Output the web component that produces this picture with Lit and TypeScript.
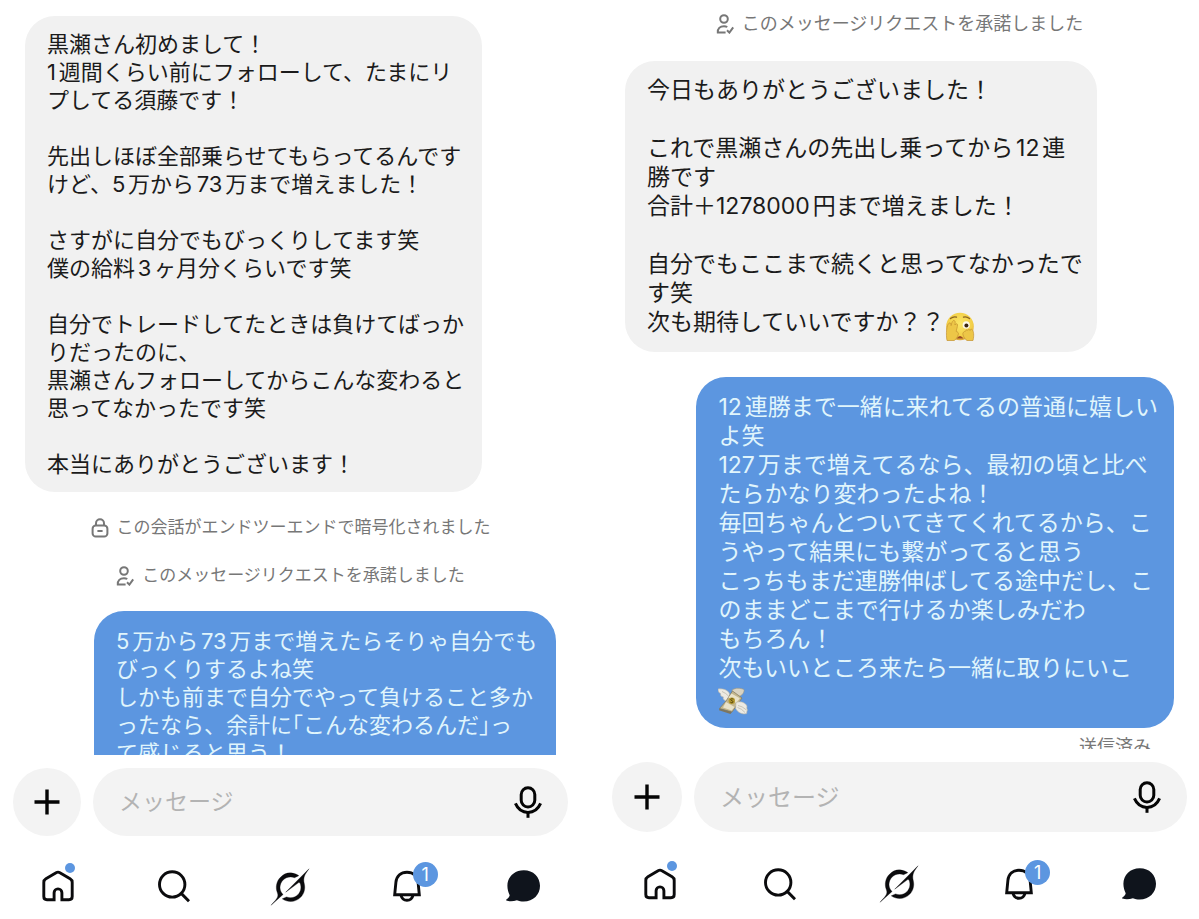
import { LitElement, html, css, nothing, TemplateResult } from "lit";
import { customElement, property } from "lit/decorators.js";

type Item =
  | { kind: "notice"; icon: "lock" | "accepted"; text: string }
  | { kind: "received" | "sent"; body: TemplateResult; status?: string };

const icons = {
  lock: html`<svg class="small" viewBox="0 0 18 20" aria-hidden="true">
    <g fill="none" stroke="currentColor" stroke-width="2">
      <path d="M5 8V5.2a4 4 0 0 1 8 0V8" />
      <rect x="1.6" y="7.6" width="14.8" height="11" rx="3.2" />
      <path d="M6.4 13h5.2" />
    </g>
  </svg>`,
  accepted: html`<svg class="small" viewBox="0 0 18 20" aria-hidden="true">
    <g fill="none" stroke="currentColor" stroke-width="2">
      <circle cx="8" cy="5" r="3.8" />
      <path d="M9.6 18.6H1.8C1.4 14.6 4 12.2 8 12.2c1.4 0 2.4.3 3.3.8" />
      <path d="M11 16.2l2.4 2.4 3.8-5.2" />
    </g>
  </svg>`,
  plus: html`<svg viewBox="0 0 32 32" aria-hidden="true">
    <path d="M16 3.5v25M3.5 16h25" fill="none" stroke="currentColor" stroke-width="3.4" />
  </svg>`,
  mic: html`<svg viewBox="0 0 32 32" aria-hidden="true">
    <g fill="none" stroke="currentColor" stroke-width="3">
      <rect x="9.2" y="1.8" width="13.6" height="19.2" rx="6.8" />
      <path d="M3.4 17.4C6 23.4 11 26.4 16 26.4s10-3 12.6-9" />
      <path d="M16 26.4v5.4" />
    </g>
  </svg>`,
  home: html`<svg viewBox="0 0 32 32" aria-hidden="true">
    <path
      d="M12.1 29.8H5q-3.2 0-3.2-3.2V12.4q0-2.4 2.1-3.6l10.2-6.1q1.9-1.1 3.8 0l10.2 6.1q2.1 1.2 2.1 3.6v14.2q0 3.2-3.2 3.2h-7.1v-7a3.9 3.9 0 0 0-7.8 0z"
      fill="none"
      stroke="currentColor"
      stroke-width="2.9"
    />
  </svg>`,
  search: html`<svg viewBox="0 0 32 32" aria-hidden="true">
    <g fill="none" stroke="currentColor" stroke-width="2.9">
      <circle cx="14.2" cy="14.4" r="12.7" />
      <path d="M23.2 23.4l7.8 7.8" />
    </g>
  </svg>`,
  grok: html`<svg class="grok" viewBox="0 0 24 24" aria-hidden="true">
    <path
      fill="currentColor"
      stroke="currentColor"
      stroke-width=".2"
      d="M9.27 15.29l7.978-5.897c.391-.29.95-.177 1.137.272.98 2.369.542 5.215-1.41 7.169-1.951 1.954-4.667 2.382-7.149 1.406l-2.711 1.257c3.889 2.661 8.611 2.003 11.562-.953 2.341-2.344 3.066-5.539 2.388-8.42l.006.007c-.983-4.232.242-5.924 2.75-9.383.06-.082.12-.164.179-.248l-3.301 3.305v-.01L9.267 15.292M7.623 16.723c-2.792-2.67-2.31-6.801.071-9.184 1.761-1.763 4.647-2.483 7.166-1.425l2.705-1.25a7.808 7.808 0 0 0-1.829-1A8.975 8.975 0 0 0 5.984 5.83c-2.533 2.536-3.33 6.436-1.962 9.764 1.022 2.487-.653 4.246-2.34 6.022-.599.63-1.199 1.259-1.682 1.925l7.62-6.815"
    />
  </svg>`,
  bell: html`<svg viewBox="0 0 32 32" aria-hidden="true">
    <g fill="none" stroke="currentColor" stroke-width="2.9">
      <path d="M3.7 24.7L4.9 12.4C5.5 6 10 2.2 16 2.2S26.5 6 27.1 12.4l1.2 12.3z" />
      <path d="M9.9 25c.8 3.4 3 5.3 6.1 5.3s5.3-1.9 6.1-5.3" />
    </g>
  </svg>`,
  chat: html`<svg class="wide" viewBox="0 0 36 36" aria-hidden="true">
    <path
      fill="#0f141c"
      d="M18.8 2.2C28.4 2.2 35 9 35 17.8s-6.600 15.800-16.400 15.800c-2.400 0-4.700-.5-6.700-1.400C8.800 33.300 5 33.700 1.400 32.600c-.5-.2-.4-.9 0-1.200 1.900-1.100 3-2.500 3.300-4.200C3.300 24.500 2.400 21.300 2.400 17.800 2.400 9 9.200 2.200 18.800 2.200z"
    />
  </svg>`,
};

const peekingFace = html`<svg class="emoji" viewBox="0 0 30 30" role="img" aria-label="指の間から覗く顔">
  <defs>
    <radialGradient id="skin" cx=".5" cy=".4" r=".6">
      <stop offset="0" stop-color="#fbe666" />
      <stop offset=".75" stop-color="#f3cf48" />
      <stop offset="1" stop-color="#dfa53a" />
    </radialGradient>
  </defs>
  <circle cx="15" cy="14.500" r="13.800" fill="url(#skin)" />
  <path d="M5.500 6.600q3-2.400 6-1.400M18.500 5.200q3-1 6 1.400" fill="none" stroke="#8a6420" stroke-width="1.300" stroke-linecap="round" />
  <ellipse cx="21.200" cy="13" rx="3.600" ry="3.800" fill="#fdf8e6" />
  <circle cx="21.400" cy="13.400" r="2" fill="#3a2412" />
  <path d="M11.500 26.500q3.500-5 7 0z" fill="#9a4a24" />
  <g fill="#edc647" stroke="#c4922f" stroke-width=".7">
    <path d="M2 28.500C.8 22 1.500 13 4 11.200c1.400-1 2.300.2 2.100 2.400C7 9 8.200 8 9.400 8.600c1 .5.900 2.300.5 4.400 1-1.800 2.500-1.600 2.600 0 .1 2-1.200 4.500-1.300 6.500 1.500.2 2.800 1.600 2 3.300-1 2.400-2 4.500-4 5.700z" />
    <path d="M28 28.500c1.200-5 .8-9.500-1-11-1-.8-1.900-.3-1.900 1-.4-1.300-1.900-1.400-2.300-.1-.6-.9-1.900-.7-2.100.7-1.900.2-3.400 1.900-2.700 3.700.8 2.400 2 4.500 4 5.700z" />
  </g>
</svg>`;

const wingedMoney = html`<svg class="emoji" viewBox="0 0 30 30" role="img" aria-label="羽の生えたお札">
  <path d="M0 2c4-.6 8 .2 11 3.500L13 12l-5 2C4.500 12.500 5 10.500 5.500 10 2.500 9.500 2 7.500 3 7 .8 6 0 4 0 2z" fill="#eceae3" stroke="#b9b4a5" stroke-width=".6" />
  <path d="M14 3c4-2.500 8-2 12-.5.500 3-2 6-5 7l-5 2z" fill="#d9d3c2" stroke="#9c957f" stroke-width=".6" />
  <path d="M14.500 4L24 11 14 25 1.500 21.500 8 14z" fill="#c3b68d" stroke="#81775a" stroke-width=".7" />
  <path d="M10.500 10.500l3-4 8.300 4.800-3.600 5zM8 15l8.500 5-2.800 3.600-8.700-3.200z" fill="#e9e2c9" />
  <path d="M1.500 21.500L14 25l-1.500 2L1 23.300z" fill="#7d755e" />
  <circle cx="13.800" cy="13.800" r="3.200" fill="#b59a2f" />
  <path d="M15.300 12.300c-1-1-2.700-.6-2.600.4.100 1.200 2.500.9 2.400 2.200-.1 1-1.900 1.200-2.800.2" fill="none" stroke="#54430c" stroke-width=".9" />
  <path d="M18 15.500c5-2 9.500.5 11 3.500-.2 1.500-.3 2.500.5 4-.6 1-.8 2.500-.8 3.500-4 1.500-9-1-11-5z" fill="#eceae3" stroke="#b9b4a5" stroke-width=".6" />
  <path d="M20 18.500q4 .5 8.500 4.500M19.500 20.500q4 1 7.500 5M4 4.500q4 1.500 7 5" fill="none" stroke="#b9b4a5" stroke-width=".7" />
</svg>`;

@customElement("chat-pane")
export class ChatPane extends LitElement {
  @property({ attribute: false }) items: Item[] = [];
  @property() name = "";

  static styles = css`
    :host {
      display: flex;
      flex-direction: column;
      min-width: 0;
      height: 100vh;
      --blue: #5c96e0;
      --grey: #f3f3f3;
    }
    .log {
      flex: 1;
      min-height: 0;
      overflow: hidden;
      display: flex;
      flex-direction: column;
      gap: var(--gap);
      padding: var(--log-top) 25px 0;
      box-sizing: border-box;
    }
    .notice {
      flex: none;
      display: flex;
      align-items: center;
      justify-content: center;
      gap: 8px;
      margin: 0;
      color: #777;
      font-size: var(--note);
      line-height: 25px;
      white-space: nowrap;
    }
    .small {
      width: 18px;
      height: 20px;
    }
    .message {
      flex: none;
      display: flex;
      flex-direction: column;
      align-items: flex-start;
      gap: 6px;
    }
    .message.sent {
      align-items: flex-end;
    }
    .bubble {
      box-sizing: border-box;
      width: 86%;
      margin: 0;
      padding: var(--pad) 22px;
      border-radius: 30px;
      background: #f1f1f1;
      color: #1b1b1b;
      font-size: var(--text);
      line-height: var(--line);
      white-space: pre;
      text-autospace: normal;
    }
    .sent .bubble {
      width: 87%;
      padding-block: 16px;
      background: var(--blue);
      color: #e0f5fc;
    }
    .half {
      font-feature-settings: "halt";
    }
    .status {
      padding-right: 23px;
      color: #777;
      font-size: 18px;
      line-height: 25px;
    }
    .emoji {
      width: 30px;
      height: 30px;
      margin: -6px 0;
      vertical-align: -6px;
    }
    .composer {
      display: flex;
      gap: 12px;
      padding: 13px var(--side) 0;
    }
    button {
      display: grid;
      place-items: center;
      padding: 0;
      border: 0;
      background: none;
      color: #050505;
    }
    button svg,
    a svg {
      display: block;
      width: 32px;
      height: 32px;
      overflow: visible;
    }
    .add {
      flex: none;
      width: var(--field);
      height: var(--field);
      border-radius: 50%;
      background: var(--grey);
    }
    .field {
      flex: 1;
      min-width: 0;
      height: var(--field);
      display: flex;
      align-items: center;
      box-sizing: border-box;
      padding: 0 24px 0 26px;
      border-radius: 40px;
      background: var(--grey);
    }
    input {
      flex: 1;
      min-width: 0;
      padding: 0;
      border: 0;
      outline: 0;
      background: none;
      font: inherit;
      font-size: var(--prompt);
      color: #1b1b1b;
    }
    input::placeholder {
      color: #b3b3b3;
      opacity: 1;
    }
    nav {
      display: grid;
      grid-template-columns: repeat(5, 1fr);
      padding: 32px 0 15px;
    }
    a {
      display: grid;
      place-items: center;
      height: var(--nav);
      color: #0b0b0d;
      text-decoration: none;
    }
    a svg.wide {
      width: 36px;
      height: 36px;
    }
    a svg.grok {
      width: 38px;
      height: 38px;
    }
    .mark {
      position: relative;
    }
    .dot,
    .count {
      position: absolute;
      border-radius: 50%;
      background: var(--blue);
    }
    .dot {
      top: -7px;
      right: -1px;
      width: 10px;
      height: 10px;
    }
    .count {
      top: -8px;
      left: 22px;
      width: 25px;
      height: 25px;
      color: #fff;
      font-size: 18px;
      line-height: 25px;
      text-align: center;
    }
  `;

  private renderItem(item: Item) {
    if (item.kind === "notice") {
      return html`<p class="notice">${icons[item.icon]}<span>${item.text}</span></p>`;
    }
    return html`<div class="message ${item.kind}">
      <p class="bubble">${item.body}</p>
      ${item.status ? html`<span class="status">${item.status}</span>` : nothing}
    </div>`;
  }

  render() {
    return html`
      <section class="log" aria-label=${this.name}>${this.items.map((i) => this.renderItem(i))}</section>
      <form class="composer" @submit=${(e: Event) => e.preventDefault()}>
        <button class="add" type="button" aria-label="追加">${icons.plus}</button>
        <div class="field">
          <input type="text" placeholder="メッセージ" aria-label="メッセージ" />
          <button type="button" aria-label="音声入力">${icons.mic}</button>
        </div>
      </form>
      <nav aria-label="メイン">
        <a href="#home" aria-label="ホーム"><span class="mark">${icons.home}<span class="dot"></span></span></a>
        <a href="#search" aria-label="検索">${icons.search}</a>
        <a href="#grok" aria-label="Grok">${icons.grok}</a>
        <a href="#notifications" aria-label="通知"><span class="mark">${icons.bell}<span class="count">1</span></span></a>
        <a href="#messages" aria-label="メッセージ">${icons.chat}</a>
      </nav>
    `;
  }
}

const lines = (...rows: unknown[]) => html`${rows.map((row, i) => (i ? html`${"\n"}${row}` : row))}`;

const first: Item[] = [
  {
    kind: "received",
    body: lines(
      "黒瀬さん初めまして！",
      "1週間くらい前にフォローして、たまにリ",
      "プしてる須藤です！",
      "",
      "先出しほぼ全部乗らせてもらってるんです",
      "けど、5万から73万まで増えました！",
      "",
      "さすがに自分でもびっくりしてます笑",
      "僕の給料3ヶ月分くらいです笑",
      "",
      "自分でトレードしてたときは負けてばっか",
      "りだったのに、",
      "黒瀬さんフォローしてからこんな変わると",
      "思ってなかったです笑",
      "",
      "本当にありがとうございます！"
    ),
  },
  { kind: "notice", icon: "lock", text: "この会話がエンドツーエンドで暗号化されました" },
  { kind: "notice", icon: "accepted", text: "このメッセージリクエストを承諾しました" },
  {
    kind: "sent",
    body: lines(
      "5万から73万まで増えたらそりゃ自分でも",
      "びっくりするよね笑",
      "しかも前まで自分でやって負けること多か",
      html`ったなら、余計に<span class="half">「</span>こんな変わるんだ<span class="half">」</span>っ`,
      "て感じると思う！",
      "",
      ""
    ),
  },
];

const second: Item[] = [
  { kind: "notice", icon: "accepted", text: "このメッセージリクエストを承諾しました" },
  {
    kind: "received",
    body: lines(
      "今日もありがとうございました！",
      "",
      "これで黒瀬さんの先出し乗ってから12連",
      "勝です",
      "合計＋1278000円まで増えました！",
      "",
      "自分でもここまで続くと思ってなかったで",
      "す笑",
      html`次も期待していいですか？？${peekingFace}`
    ),
  },
  {
    kind: "sent",
    status: "送信済み",
    body: lines(
      "12連勝まで一緒に来れてるの普通に嬉しい",
      "よ笑",
      "127万まで増えてるなら、最初の頃と比べ",
      "たらかなり変わったよね！",
      "毎回ちゃんとついてきてくれてるから、こ",
      "うやって結果にも繋がってると思う",
      "こっちもまだ連勝伸ばしてる途中だし、こ",
      "のままどこまで行けるか楽しみだわ",
      "もちろん！",
      "次もいいところ来たら一緒に取りにいこ",
      wingedMoney
    ),
  },
];

@customElement("app-root")
export class AppRoot extends LitElement {
  static styles = css`
    :host {
      display: grid;
      grid-template-columns: 581fr 599fr;
      gap: 19px;
      background: #fff;
      font-family: Inter, "Noto Sans CJK JP", sans-serif;
    }
    .first {
      --gap: 23px;
      --log-top: 16px;
      --pad: 14px;
      --text: 22px;
      --line: 28px;
      --note: 17px;
      --side: 13px;
      --field: 68px;
      --prompt: 23px;
      --nav: 36px;
    }
    .second {
      --gap: 25px;
      --log-top: 11px;
      --pad: 15px;
      --text: 23px;
      --line: 29px;
      --note: 18px;
      --side: 12px;
      --field: 70px;
      --prompt: 24px;
      --nav: 40px;
    }
  `;

  render() {
    return html`
      <chat-pane class="first" lang="ja" name="会話 1" .items=${first}></chat-pane>
      <chat-pane class="second" lang="ja" name="会話 2" .items=${second}></chat-pane>
    `;
  }
}
